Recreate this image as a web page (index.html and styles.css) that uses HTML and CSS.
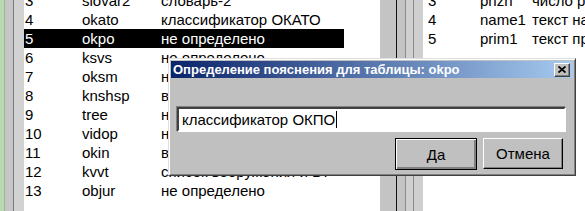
FILE: index.html
```html
<!DOCTYPE html>
<html lang="ru">

<head>
    <meta charset="UTF-8">
    <title>Таблицы</title>
    <link rel="stylesheet" href="styles.css">
</head>

<body>
    <div class="screen">
        <div class="edge"></div>

        <!-- left list: tables -->
        <div class="list left">
            <div class="rows">
                <div class="row"><span>3</span><span>slovar2</span><span>словарь-2</span></div>
                <div class="row"><span>4</span><span>okato</span><span>классификатор ОКАТО</span></div>
                <div class="row selected"><span>5</span><span>okpo</span><span>не определено</span></div>
                <div class="row"><span>6</span><span>ksvs</span><span>не определено</span></div>
                <div class="row"><span>7</span><span>oksm</span><span>не определено</span></div>
                <div class="row"><span>8</span><span>knshsp</span><span>вид номенклатуры</span></div>
                <div class="row"><span>9</span><span>tree</span><span>не определено</span></div>
                <div class="row"><span>10</span><span>vidop</span><span>не определено</span></div>
                <div class="row"><span>11</span><span>okin</span><span>вид информации</span></div>
                <div class="row"><span>12</span><span>kvvt</span><span>список вооружения и ВТ</span></div>
                <div class="row"><span>13</span><span>objur</span><span>не определено</span></div>
            </div>
        </div>

        <div class="splitter"></div>

        <!-- right list: fields -->
        <div class="list right">
            <div class="rows">
                <div class="row"><span>3</span><span>pnzn</span><span>число рядов</span></div>
                <div class="row"><span>4</span><span>name1</span><span>текст наименования</span></div>
                <div class="row"><span>5</span><span>prim1</span><span>текст примечания</span></div>
            </div>
        </div>

        <!-- modal dialog -->
        <div class="dialog">
            <div class="titlebar">
                <span class="title">Определение пояснения для таблицы: okpo</span>
                <button class="close" type="button">
                    <svg width="8" height="7" viewBox="0 0 8 7">
                        <path d="M0.5 0.5 L7.5 6.5 M7.5 0.5 L0.5 6.5" stroke="#000" stroke-width="1.8" fill="none"/>
                    </svg>
                </button>
            </div>
            <div class="dialog-body">
                <div class="field"><span class="caret">классификатор ОКПО</span></div>
                <div class="buttons">
                    <button class="btn default" type="button">Да</button>
                    <button class="btn" type="button">Отмена</button>
                </div>
            </div>
        </div>
    </div>
</body>

</html>
```

FILE: styles.css
```css
/* General */
body {
    margin: 0;
    padding: 0;
    overflow: hidden;
    font-family: "Liberation Sans", Arial, sans-serif;
}

.screen {
    position: relative;
    display: flex;
    width: 585px;
    height: 211px;
    overflow: hidden;
    background: #fff;
}

/* Window edge on the left */
.edge {
    flex: 0 0 24px;
    background: linear-gradient(to right,
        #b7dab1 0 4px, #9fb39c 4px 5px,
        #c6c6c6 5px 13px, #7a7a7a 13px 14px,
        #d2d2d2 14px 24px);
}

/* Lists */
.list {
    background: #fff;
    overflow: hidden;
    font-size: 15px;
    color: #000;
}

.list.left {
    flex: 0 0 356px;
}

.list.right {
    flex: 1;
}

.rows {
    margin-top: -9px;
}

.row {
    display: grid;
    height: 19px;
    line-height: 19px;
    white-space: nowrap;
}

.left .row {
    width: 319px;
    grid-template-columns: 57px 79px 1fr;
    padding-left: 1px;
}

.right .row {
    grid-template-columns: 52px 52px 1fr;
    padding-left: 5px;
}

.row.selected {
    background: #000;
    color: #fff;
}

/* Splitter between the lists */
.splitter {
    flex: 0 0 43px;
    background: linear-gradient(to right,
        #c4c4c4 0 16px, #111 16px 17px,
        #c4c4c4 17px 25px, #8c8c8c 25px 26px,
        #d0d0d0 26px 33px, #8c8c8c 33px 34px,
        #cfcfcf 34px 43px);
}

/* Dialog */
.dialog {
    position: absolute;
    left: 168px;
    top: 58px;
    width: 402px;
    height: 112px;
    padding: 2px;
    background: #c0c0c0;
    border: 1px solid;
    border-color: #dfdfdf #404040 #404040 #dfdfdf;
    box-shadow: inset 1px 1px #fff, inset -1px -1px #808080;
    display: flex;
    flex-direction: column;
}

.titlebar {
    height: 17px;
    display: flex;
    align-items: center;
    justify-content: space-between;
    padding: 0 3px 0 2px;
    background: linear-gradient(to right, #0a246a, #a6caf0);
}

.title {
    color: #fff;
    font-size: 13px;
    font-weight: bold;
}

.close {
    width: 16px;
    height: 14px;
    padding: 0;
    display: flex;
    align-items: center;
    justify-content: center;
    background: #c0c0c0;
    border: 1px solid;
    border-color: #fff #404040 #404040 #fff;
    box-shadow: inset -1px -1px #808080;
}

.dialog-body {
    flex: 1;
    padding: 29px 7px 0 6px;
}

/* Text field */
.field {
    height: 21px;
    line-height: 21px;
    padding: 0 3px;
    background: #fff;
    border: 2px solid;
    border-color: #404040 #fff #fff #404040;
    box-shadow: -1px -1px #808080;
    font-size: 15px;
}

.caret {
    border-right: 1px solid #000;
    padding-right: 1px;
}

/* Buttons */
.buttons {
    display: flex;
    justify-content: flex-end;
    gap: 6px;
    margin-top: 6px;
    padding-right: 3px;
}

.btn {
    width: 80px;
    height: 31px;
    padding: 0;
    font-family: "Liberation Sans", Arial, sans-serif;
    font-size: 15px;
    color: #000;
    background: #c0c0c0;
    border: 1px solid;
    border-color: #fff #000 #000 #fff;
    box-shadow: inset -1px -1px #808080;
}

.btn.default {
    width: 82px;
    height: 32px;
    border: 1px solid #000;
    box-shadow: inset 1px 1px #fff, inset -2px -2px #808080;
}
```
